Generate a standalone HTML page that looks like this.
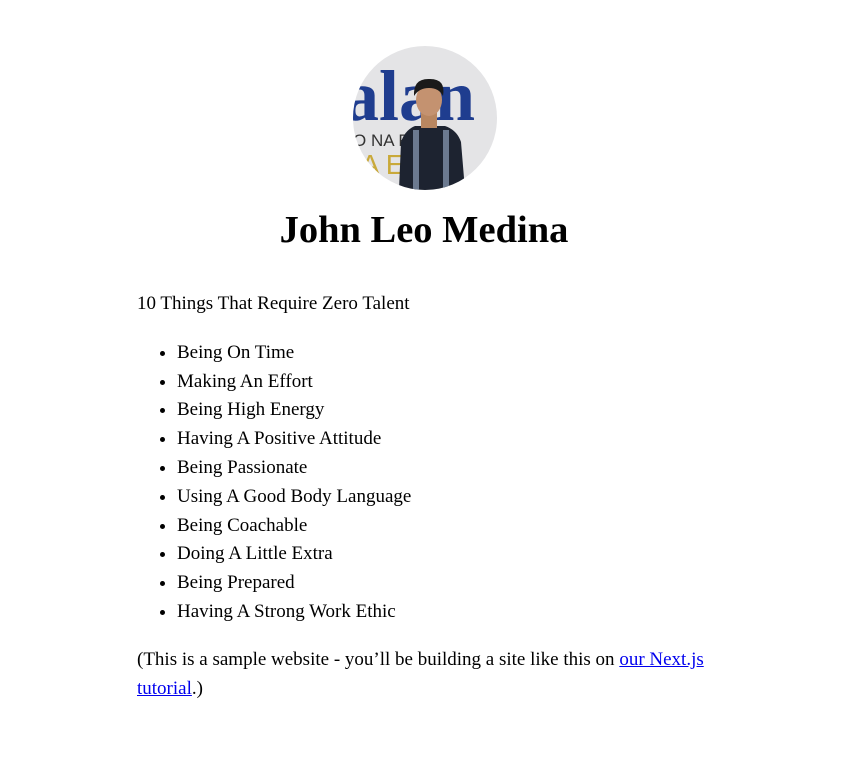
<!DOCTYPE html>
<html><head><meta charset="utf-8"><style>
html,body{margin:0;padding:0;background:#fff;}
body{font-family:"Liberation Serif",serif;font-size:19px;line-height:1.6;color:#000;width:844px;height:759px;overflow:hidden;position:relative;}
.av{position:absolute;left:353px;top:46px;width:144px;height:144px;border-radius:50%;overflow:hidden;}
h1{position:absolute;top:207px;left:0;width:848px;text-align:center;margin:0;font-size:38.5px;line-height:46px;font-weight:bold;}
.c{position:absolute;left:137px;top:290px;width:580px;}
p{margin:0;line-height:28.8px;}
ul{margin:20px 0 19px 0;padding-left:40px;}
li{line-height:28.8px;}
a{color:#00e;}
</style></head><body>
<div class="av"><svg width="144" height="144" viewBox="0 0 144 144">
<rect width="144" height="144" fill="#e4e4e6"/>
<text x="-10" y="74" font-family="Liberation Serif" font-weight="bold" font-size="72" fill="#1f3d8f">alan</text>
<text x="0" y="100" font-family="Liberation Sans" font-size="17" fill="#333">O NA      RSA</text>
<text x="0" y="128" font-family="Liberation Sans" font-size="28" fill="#c9a93a">IA      ER</text>
<path d="M46 144 L48 96 Q52 84 62 80 L92 80 Q104 84 108 96 L112 144Z" fill="#1d2330"/>
<rect x="60" y="84" width="6" height="60" fill="#6c7a90"/>
<rect x="90" y="84" width="6" height="60" fill="#6c7a90"/>
<rect x="68" y="66" width="16" height="16" fill="#b88660"/>
<ellipse cx="76" cy="54" rx="13" ry="16" fill="#c49270"/>
<path d="M61 50 Q60 32 77 33 Q93 33 90 50 Q86 42 76 42 Q66 42 61 50Z" fill="#1a1a1a"/>
</svg></div>
<h1>John Leo Medina</h1>
<div class="c">
<p>10 Things That Require Zero Talent</p>
<ul>
<li>Being On Time</li>
<li>Making An Effort</li>
<li>Being High Energy</li>
<li>Having A Positive Attitude</li>
<li>Being Passionate</li>
<li>Using A Good Body Language</li>
<li>Being Coachable</li>
<li>Doing A Little Extra</li>
<li>Being Prepared</li>
<li>Having A Strong Work Ethic</li>
</ul>
<p>(This is a sample website - you’ll be building a site like this on <a href="#">our Next.js tutorial</a>.)</p>
</div>
</body></html>
